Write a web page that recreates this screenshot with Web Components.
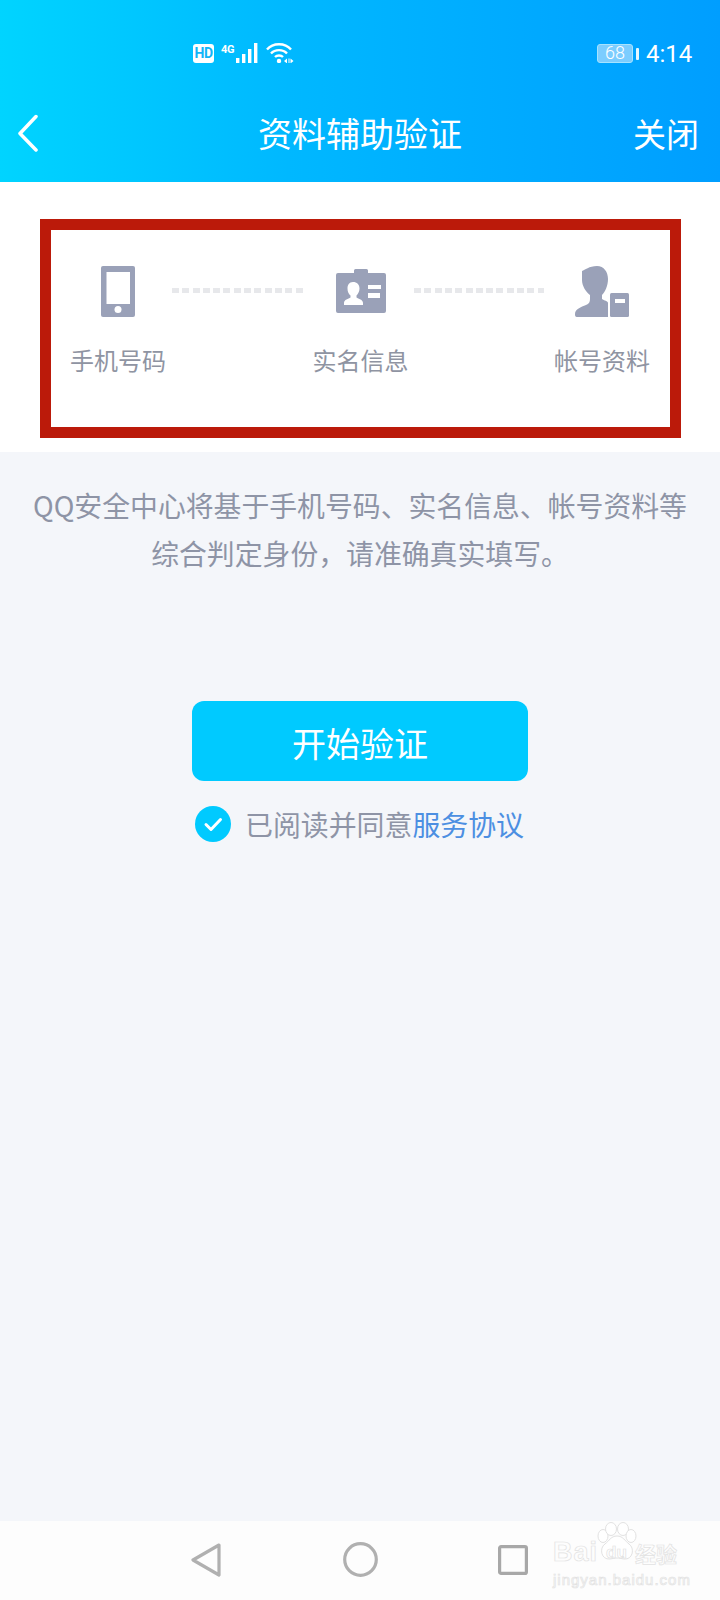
<!DOCTYPE html>
<html lang="zh"><head><meta charset="utf-8"><style>
html,body{margin:0;padding:0}
body{width:720px;height:1600px;background:#f4f6fa;font-family:"Noto Sans CJK SC","Noto Sans",sans-serif;display:flex;flex-direction:column;overflow:hidden}
qq-main{flex:1}
</style></head><body>
<qq-header></qq-header>
<qq-steps></qq-steps>
<qq-main></qq-main>
<qq-softkeys></qq-softkeys>
<script>
function def(name,html){customElements.define(name,class extends HTMLElement{constructor(){super();this.attachShadow({mode:'open'}).innerHTML=html}})}
def('qq-status',`<style>
:host{display:flex;align-items:center;height:92px;padding:15px 28px 0 193px;box-sizing:border-box;color:#fff;font-family:"Roboto",sans-serif}
.hd{width:21px;height:19px;border-radius:3px;background:#fff;color:#10b5f8;font:700 14px/19px "Roboto",sans-serif;text-align:center;letter-spacing:-.6px}
.g{font:700 11px/11px "Roboto",sans-serif;margin:-9px 0 0 7px;width:15px;letter-spacing:-.3px}
.bat{margin-left:auto;width:36px;height:19px;box-sizing:border-box;border:1.500px solid #a6e3ff;border-radius:3px;background:#7ccdff;font:300 18px/16px "Roboto",sans-serif;text-align:center;color:#fff}
.tab{width:3px;height:12px;background:#e6f7ff;margin:0 7px 0 3px;border-radius:1px}
.t{font:400 24px/24px "Roboto",sans-serif;width:46px}
svg{display:block}
</style><span class="hd">HD</span><span class="g">4G</span>
<svg width="23" height="20" viewBox="0 0 23 20" style="margin-top:-1px"><g fill="#fff"><rect x="0" y="15" width="3.400" height="5"/><rect x="6" y="11" width="3.400" height="9"/><rect x="12" y="6" width="3.400" height="14"/><rect x="18" y="0" width="3.400" height="20"/></g></svg>
<svg width="28" height="20" viewBox="0 0 28 20" style="margin-left:7px;margin-top:-1px"><g fill="none" stroke="#fff" stroke-width="2.400"><path d="M1 6.500C7-.5 19-.5 25 6.500"/><path d="M5 10.500C9 6 17 6 21 10.500"/><path d="M9 14C11 12 15 12 17 14"/></g><circle cx="13" cy="18" r="2.200" fill="#fff"/><path d="M18 18l3-2.500v5zM22.500 15.500h1v5h-1zM24.500 15.500l3 2.500-3 2.500z" fill="#fff"/></svg>
<span class="bat">68</span><span class="tab"></span><span class="t">4:14</span>`);
def('qq-titlebar',`<style>
:host{display:block;position:relative;height:90px;box-sizing:border-box;padding-bottom:8px;color:#fff}
.r{display:grid;grid-template-columns:120px 1fr 120px;align-items:center;height:82px}
h1{margin:0;font:400 34px/46px "Noto Sans CJK SC",sans-serif;text-align:center}
.c{font:400 33px/46px "Noto Sans CJK SC",sans-serif;text-align:right;padding-right:21px}
svg{display:block;margin-left:16px}
</style><div class="r"><svg width="24" height="38" viewBox="0 0 24 38"><path d="M20 2.500L4 19.500 20 36" fill="none" stroke="#fff" stroke-width="3.500" stroke-linecap="round" stroke-linejoin="round"/></svg><h1>资料辅助验证</h1><span class="c">关闭</span></div>`);
def('qq-header',`<style>:host{display:block;height:182px;overflow:hidden;background:linear-gradient(90deg,#00d4ff 0%,#00b8ff 40%,#009eff 100%)}</style><qq-status></qq-status><qq-titlebar></qq-titlebar>`);
def('qq-step',`<style>
:host{display:flex;flex-direction:column;align-items:center;width:100px;flex:none}
.i{height:52px;display:flex;align-items:center;justify-content:center}
.l{margin-top:26px;font:400 24px/34px "Noto Sans CJK SC",sans-serif;color:#8f94a2;white-space:nowrap}
</style><div class="i"><slot name="icon"></slot></div><div class="l"><slot></slot></div>`);
def('qq-dots',`<style>:host{display:block;flex:1;height:5px;margin:23px 8px 0 4px;background:repeating-linear-gradient(90deg,#e7e8eb 0 7px,transparent 7px 10.300px)}</style>`);
def('qq-steps',`<style>
:host{display:block;background:#fff;height:270px;box-sizing:border-box;padding-top:37px}
.box{box-sizing:border-box;margin:0 39px 0 40px;height:219px;border:11px solid #bb1a0a;padding:35px 18px 0 17px;display:flex;align-items:flex-start}
svg{display:block}
</style><div class="box">
<qq-step><svg slot="icon" width="34" height="51" viewBox="0 0 34 51"><rect width="34" height="51" rx="2" fill="#9aa1b8"/><rect x="5.500" y="6" width="23.500" height="32" fill="#fff"/><circle cx="17" cy="43.500" r="3.500" fill="#fff"/></svg>手机号码</qq-step>
<qq-dots></qq-dots>
<qq-step><svg slot="icon" width="50" height="46" viewBox="0 0 50 46"><path d="M2 5H18V2.500a1.500 1.500 0 0 1 1.500-1.500H30.500a1.500 1.500 0 0 1 1.500 1.500V5H48a2 2 0 0 1 2 2V43a2 2 0 0 1-2 2H2a2 2 0 0 1-2-2V7a2 2 0 0 1 2-2z" fill="#9aa1b8"/><path d="M17 14c4 0 6.500 2.500 6.500 6.500 0 3-1.500 5.500-3 7v2c2 1.500 6.500 2 6.500 5.500v2H8v-2c0-3.500 4.500-4 6.500-5.500v-2c-2-1.500-3-4-3-7C11.500 17 13 14 17 14z" fill="#fff"/><rect x="32" y="17" width="13" height="4" fill="#fff"/><rect x="32" y="25" width="12" height="5" fill="#fff"/></svg>实名信息</qq-step>
<qq-dots style="margin:23px 8px 0 3px"></qq-dots>
<qq-step><svg slot="icon" width="54" height="51" viewBox="0 0 54 51"><path d="M7 5C10 4 14 0 22 0C29 0 33 6 33 13C33 20 30 26 27 29V33C29 34.500 33 35 33 37V51H2C0 51 0 49 0 48C0 43 6 41 11 39C14 38 15 36 15 33V29C11 26 7 20 7 14Z" fill="#9aa1b8"/><rect x="35" y="27" width="19" height="24" rx="1.500" fill="#9aa1b8"/><rect x="40" y="33" width="10" height="4" fill="#fff"/></svg>帐号资料</qq-step>
</div>`);
def('qq-button',`<style>
:host{display:flex;align-items:center;justify-content:center;width:336px;height:80px;box-sizing:border-box;padding-top:3px;border-radius:12px;background:#00caff;color:#fff;font:400 34px/46px "Noto Sans CJK SC",sans-serif}
</style><slot></slot>`);
def('qq-agree',`<style>
:host{display:flex;align-items:center;gap:14px;font:400 27.900px/40px "Noto Sans CJK SC",sans-serif;color:#8e94a6;white-space:nowrap}
a{color:#4c8fe2;text-decoration:none}
svg{display:block;flex:none}
</style><svg width="36" height="36" viewBox="0 0 36 36"><circle cx="18" cy="18" r="18" fill="#00caff"/><path d="M11 18.500l5 5 9.500-10" fill="none" stroke="#fff" stroke-width="3" stroke-linecap="round" stroke-linejoin="round"/></svg><span><slot></slot><a href="#">服务协议</a></span>`);
def('qq-main',`<style>
:host{display:flex;flex-direction:column;align-items:center}
p{margin:30px 0 0;font:400 27.850px/47.500px "Noto Sans CJK SC",sans-serif;color:#8e94a6;text-align:center;width:700px}
qq-button{margin-top:124px}
qq-agree{margin-top:23px;margin-left:-1px}
</style><p>QQ安全中心将基于手机号码、实名信息、帐号资料等<br>综合判定身份&#xFF0C;请准确真实填写。</p><qq-button>开始验证</qq-button><qq-agree>已阅读并同意</qq-agree>`);
def('qq-baidu',`<style>
:host{position:absolute;left:553px;top:1px;width:128px;height:62px;color:transparent;-webkit-text-stroke:.7px #e2e2e2}
div{position:absolute;white-space:nowrap;line-height:1}
.b{left:0;top:17px;font:700 27px/26px "Liberation Sans",sans-serif;letter-spacing:1px}
.d{left:53px;top:22px;font:700 17px/18px "Liberation Sans",sans-serif}
.z{left:82px;top:18px;font:700 21px/26px "Noto Sans CJK SC",sans-serif}
.u{left:0;top:49px;font:400 15px/17px "Liberation Sans",sans-serif;letter-spacing:1px}
svg{position:absolute;left:44px;top:0}
</style><svg width="40" height="40" viewBox="0 0 40 40"><g fill="#fff" stroke="#e2e2e2" stroke-width="1"><ellipse cx="6" cy="14" rx="5" ry="6.500"/><ellipse cx="14" cy="7" rx="5.500" ry="6.500"/><ellipse cx="26" cy="7" rx="5.500" ry="6.500"/><ellipse cx="34" cy="14" rx="5" ry="6.500"/><path d="M20 14c6 0 8 5 12 8 6 4 4 16-5 15-3-.5-5-1-7-1s-4 .5-7 1c-9 1-11-11-5-15 4-3 6-8 12-8z"/></g></svg><div class="b">Bai</div><div class="d">du</div><div class="z">经验</div><div class="u">jingyan.baidu.com</div>`);
def('qq-softkeys',`<style>
:host{display:block;position:relative;height:79px;background:#fdfdfd;flex:none}
.r{display:flex;align-items:center;height:100%;padding:0 0 2px 191px;box-sizing:border-box}
svg{display:block;flex:none}
</style><div class="r"><svg width="30" height="34" viewBox="0 0 30 34"><path d="M28 2L2 17 28 32z" fill="none" stroke="#b0b0b0" stroke-width="3.200" stroke-linejoin="round"/></svg><svg width="35" height="35" viewBox="0 0 35 35" style="margin-left:122px"><circle cx="17.500" cy="17.500" r="15.800" fill="none" stroke="#b0b0b0" stroke-width="3.200"/></svg><svg width="30" height="30" viewBox="0 0 30 30" style="margin-left:120px"><rect x="1.600" y="1.600" width="26.800" height="26.800" rx="1.500" fill="none" stroke="#a8a8a8" stroke-width="3.200"/></svg></div><qq-baidu></qq-baidu>`);
</script></body></html>
